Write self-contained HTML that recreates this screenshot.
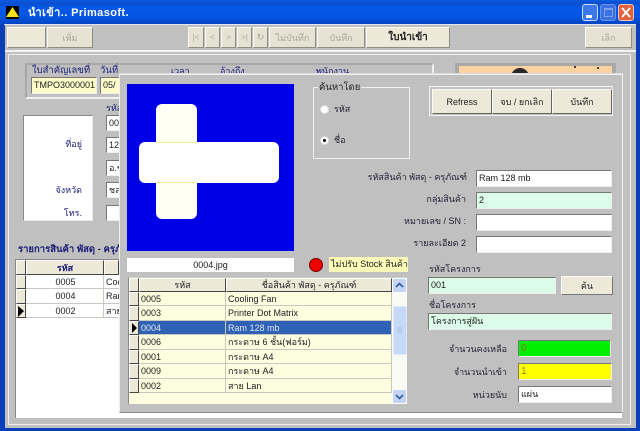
<!DOCTYPE html>
<html><head><meta charset="utf-8"><style>
html,body{margin:0;padding:0;background:#c0c0c0}
#w{position:relative;width:640px;height:431px;overflow:hidden;background:#c0c0c0;font-family:"Liberation Sans",sans-serif;font-size:9px;color:#222;filter:blur(.35px)}
#w div{position:absolute;box-sizing:border-box;white-space:nowrap}
.btn{background:#ece9d8;border:1px solid;border-color:#fbfaf3 #8f8d80 #8f8d80 #fbfaf3;text-align:center;display:flex;align-items:center;justify-content:center;color:#222;font-size:9px}
.dis{color:#aaa69a;background:#e6e3d4}
.in{background:#fff;border:1px solid;border-color:#777 #eee #eee #777;padding-left:2px;font-size:9px;line-height:15px;color:#222}
.lb{color:#223;font-size:9px;line-height:12px}
.nv{color:#1c1c78;font-size:9px;line-height:12px}
.r{text-align:right}
.cell{border-right:1px solid #c8c8c0;border-bottom:1px solid #c8c8c0;line-height:14px;padding-left:2px;font-size:9px;color:#222}
.ind{background:#ece9d8;border:1px solid;border-color:#fff #444 #444 #fff}
</style></head><body><div id="w">
<!-- window frame -->
<div style="left:0;top:0;width:640px;height:24px;background:linear-gradient(#0a5be0 0,#0a4fd0 3px,#0658e8 8px,#0454e0 17px,#0344c0 24px)"></div>
<div style="left:0;top:24px;width:5px;height:407px;background:#0a3fb8"></div>
<div style="left:636px;top:24px;width:4px;height:407px;background:#0a3fb8"></div>
<div style="left:0;top:428px;width:640px;height:3px;background:#0a3fb8"></div>
<!-- title -->
<div style="left:6px;top:6px;width:13px;height:13px;background:#000"></div>
<svg style="position:absolute;left:6px;top:7px" width="13" height="11"><polygon points="6.5,0 13,10 0,10" fill="#f6e020"/></svg>
<div style="left:28px;top:6px;color:#fff;font-size:11px;font-weight:bold;line-height:14px;letter-spacing:.4px">นำเข้า.. Primasoft.</div>
<div style="left:582px;top:4px;width:16px;height:17px;background:#3c78ea;border:1px solid #cfdcf8;border-radius:3px"></div>
<div style="left:586px;top:15px;width:6px;height:3px;background:#fff"></div>
<div style="left:600px;top:4px;width:16px;height:17px;background:#3a70e0;border:1px solid #6a96ea;border-radius:3px"></div>
<div style="left:604px;top:8px;width:9px;height:9px;border:1px solid #7ea2e8;border-top-width:2px"></div>
<div style="left:618px;top:4px;width:16px;height:17px;background:#e2603c;border:1px solid #f0c8b8;border-radius:3px"></div>
<svg style="position:absolute;left:618px;top:4px" width="16" height="17"><path d="M4 4L12 13M12 4L4 13" stroke="#fff" stroke-width="2"/></svg>
<!-- toolbar -->
<div style="left:4px;top:24px;width:632px;height:1px;background:#dfe6f0"></div>
<div class="btn" style="left:7px;top:27px;width:39px;height:21px"></div>
<div class="btn dis" style="left:47px;top:27px;width:46px;height:21px">เพิ่ม</div>
<div class="btn dis" style="left:188px;top:27px;width:16px;height:21px;font-size:8px">|&lt;</div>
<div class="btn dis" style="left:205px;top:27px;width:15px;height:21px;font-size:8px">&lt;</div>
<div class="btn dis" style="left:221px;top:27px;width:15px;height:21px;font-size:8px">&gt;</div>
<div class="btn dis" style="left:237px;top:27px;width:15px;height:21px;font-size:8px">&gt;|</div>
<div class="btn dis" style="left:253px;top:27px;width:15px;height:21px;font-size:9px">↻</div>
<div class="btn dis" style="left:269px;top:27px;width:47px;height:21px">ไม่บันทึก</div>
<div class="btn dis" style="left:317px;top:27px;width:48px;height:21px">บันทึก</div>
<div class="btn" style="left:366px;top:27px;width:84px;height:21px;font-weight:bold;font-size:10px">ใบนำเข้า</div>
<div class="btn dis" style="left:585px;top:27px;width:47px;height:21px">เลิก</div>
<div style="left:5px;top:50px;width:631px;height:2px;background:#f2f2f2"></div>
<!-- main panel -->
<div style="left:8px;top:54px;width:623px;height:371px;border:1px solid #f0f0f0"></div>
<!-- top group -->
<div style="left:25px;top:63px;width:409px;height:36px;border:2px solid;border-color:#a8a8a8 #eee #f0f0f0 #a8a8a8"></div>
<div class="nv" style="left:32px;top:65px;font-size:9.5px">ใบสำคัญเลขที่</div>
<div class="nv" style="left:100px;top:65px;font-size:9.5px">วันที่</div>
<div class="nv" style="left:171px;top:65px">เวลา</div>
<div class="nv" style="left:220px;top:65px">อ้างถึง</div>
<div class="nv" style="left:316px;top:65px">พนักงาน</div>
<div class="in" style="left:31px;top:77px;width:66px;height:17px;background:#fdfbc8">TMPO3000001</div>
<div class="in" style="left:100px;top:77px;width:20px;height:17px;background:#fdfbc8">05/</div>
<!-- peach -->
<div style="left:455px;top:63px;width:161px;height:12px;background:#a8a8a8"></div>
<div style="left:459px;top:66px;width:153px;height:9px;background:#f9d2a0"></div>
<div style="left:511px;top:68px;width:18px;height:18px;background:#2a2a2a;border-radius:50%"></div>
<div style="left:574px;top:66px;width:2px;height:2px;background:#444"></div>
<div style="left:597px;top:67px;width:2px;height:2px;background:#444"></div>
<!-- left box -->
<div style="left:23px;top:115px;width:70px;height:106px;background:#fff;border:1px solid;border-color:#888 #e8e8e8 #e8e8e8 #888"></div>
<div class="nv r" style="left:40px;top:138px;width:42px">ที่อยู่</div>
<div class="nv r" style="left:40px;top:184px;width:42px">จังหวัด</div>
<div class="nv r" style="left:40px;top:207px;width:42px">โทร.</div>
<div class="nv" style="left:106px;top:102px">รหัส</div>
<div class="in" style="left:106px;top:115px;width:14px;height:16px;line-height:14px">00</div>
<div class="in" style="left:106px;top:137px;width:14px;height:16px;line-height:14px">12</div>
<div class="in" style="left:106px;top:160px;width:14px;height:16px;line-height:14px">อ.ข</div>
<div class="in" style="left:106px;top:182px;width:14px;height:16px;line-height:14px">ชล</div>
<div class="in" style="left:106px;top:205px;width:14px;height:16px"></div>
<!-- left grid -->
<div style="left:18px;top:243px;color:#1c1c78;font-size:9.5px;font-weight:bold;line-height:13px;width:101px;overflow:hidden">รายการสินค้า พัสดุ - ครุภัณฑ์</div>
<div style="left:15px;top:259px;width:607px;height:159px;background:#fff;border-left:1px solid #888;border-top:1px solid #888"></div>
<div class="btn" style="left:16px;top:260px;width:10px;height:15px;border-color:#fff #444 #444 #fff"></div>
<div class="btn" style="left:26px;top:260px;width:78px;height:15px;border-color:#fff #444 #444 #fff;font-weight:bold;color:#1c1c78">รหัส</div>
<div class="btn" style="left:104px;top:260px;width:15px;height:15px;border-color:#fff #444 #444 #fff"></div>
<div class="ind" style="left:16px;top:275px;width:10px;height:14px"></div>
<div class="ind" style="left:16px;top:289px;width:10px;height:15px"></div>
<div class="ind" style="left:16px;top:304px;width:10px;height:14px"></div>
<svg style="position:absolute;left:17px;top:306px" width="8" height="11"><polygon points="1,0 7,5 1,11" fill="#000"/></svg>
<div class="cell" style="left:26px;top:275px;width:78px;height:14px;text-align:center">0005</div>
<div class="cell" style="left:26px;top:289px;width:78px;height:15px;text-align:center">0004</div>
<div class="cell" style="left:26px;top:304px;width:78px;height:14px;text-align:center">0002</div>
<div class="cell" style="left:104px;top:275px;width:15px;height:14px;overflow:hidden;border-right:0">Coo</div>
<div class="cell" style="left:104px;top:289px;width:15px;height:15px;overflow:hidden;border-right:0">Ram</div>
<div class="cell" style="left:104px;top:304px;width:15px;height:14px;overflow:hidden;border-right:0">สาย</div>
<!-- dialog -->
<div style="left:119px;top:74px;width:504px;height:339px;background:#c0c0c0;border:1px solid;border-color:#efefef #efefef #8a8a8a #efefef;box-shadow:0 -1px 0 #dcdcdc"></div>
<div style="left:127px;top:84px;width:167px;height:167px;background:#0000e6"></div>
<div style="left:156px;top:104px;width:41px;height:115px;background:#fffff4;border-radius:6px"></div>
<div style="left:139px;top:142px;width:140px;height:41px;background:#fff;border-radius:6px"></div>
<div style="left:157px;top:142px;width:39px;height:1px;background:#f4ec90"></div>
<div style="left:157px;top:182px;width:39px;height:1px;background:#f4ec90"></div>
<div style="left:127px;top:258px;width:167px;height:14px;background:#fff;text-align:center;font-size:9px;line-height:14px;color:#222">0004.jpg</div>
<div style="left:309px;top:258px;width:14px;height:14px;background:#ee0000;border:1px solid #700;border-radius:50%"></div>
<div style="left:329px;top:257px;width:79px;height:15px;background:#fdfbb8;font-size:9px;line-height:15px;padding-left:2px;color:#222;overflow:hidden">ไม่ปรับ Stock สินค้า</div>
<!-- search group -->
<div style="left:313px;top:87px;width:97px;height:72px;border:1px solid #f0f0f0"></div>
<div style="left:318px;top:81px;background:#c0c0c0;padding:0 1px;font-size:9.5px;line-height:13px;color:#222">ค้นหาโดย</div>
<div style="left:320px;top:105px;width:9px;height:9px;background:#fff;border-radius:50%;border:1px solid #ddd"></div>
<div style="left:320px;top:136px;width:9px;height:9px;background:#fff;border-radius:50%;border:1px solid #ddd"></div>
<div style="left:323px;top:139px;width:3px;height:3px;background:#000;border-radius:50%"></div>
<div class="lb" style="left:334px;top:103px">รหัส</div>
<div class="lb" style="left:334px;top:134px">ชื่อ</div>
<!-- action buttons -->
<div style="left:429px;top:86px;width:184px;height:30px;border:1px solid #f4f4f4"></div>
<div class="btn" style="left:432px;top:89px;width:60px;height:25px;border-color:#fbfaf3 #666 #666 #fbfaf3">Refress</div>
<div class="btn" style="left:492px;top:89px;width:60px;height:25px;border-color:#fbfaf3 #666 #666 #fbfaf3">จบ / ยกเลิก</div>
<div class="btn" style="left:552px;top:89px;width:60px;height:25px;border-color:#fbfaf3 #666 #666 #fbfaf3">บันทึก</div>
<!-- right form -->
<div class="lb r" style="left:337px;top:171px;width:130px">รหัสสินค้า พัสดุ - ครุภัณฑ์</div>
<div class="lb r" style="left:336px;top:193px;width:130px">กลุ่มสินค้า</div>
<div class="lb r" style="left:336px;top:215px;width:130px">หมายเลข / SN :</div>
<div class="lb r" style="left:336px;top:237px;width:130px">รายละเอียด 2</div>
<div class="in" style="left:476px;top:170px;width:136px;height:17px">Ram 128 mb</div>
<div class="in" style="left:476px;top:192px;width:136px;height:17px;background:#dcfbe8">2</div>
<div class="in" style="left:476px;top:214px;width:136px;height:17px"></div>
<div class="in" style="left:476px;top:236px;width:136px;height:17px"></div>
<div class="lb" style="left:429px;top:263px">รหัสโครงการ</div>
<div class="in" style="left:428px;top:277px;width:128px;height:17px;background:#dcfbe8">001</div>
<div class="btn" style="left:561px;top:276px;width:52px;height:19px;border-color:#fbfaf3 #777 #777 #fbfaf3">ค้น</div>
<div class="lb" style="left:429px;top:299px">ชื่อโครงการ</div>
<div class="in" style="left:428px;top:313px;width:184px;height:17px;background:#dcfbe8">โครงการสู่ฝัน</div>
<div class="lb r" style="left:430px;top:343px;width:77px">จำนวนคงเหลือ</div>
<div class="lb r" style="left:430px;top:366px;width:77px">จำนวนนำเข้า</div>
<div class="lb r" style="left:430px;top:389px;width:77px">หน่วยนับ</div>
<div class="in" style="left:518px;top:340px;width:93px;height:17px;background:#00ee00;color:#7a7a20;font-size:10px">0</div>
<div class="in" style="left:518px;top:363px;width:94px;height:17px;background:#ffff00;color:#8a8a20;font-size:10px">1</div>
<div class="in" style="left:518px;top:386px;width:94px;height:17px">แผ่น</div>
<!-- dialog grid -->
<div style="left:128px;top:277px;width:279px;height:127px;background:#fdfde0;border-left:1px solid #888;border-top:1px solid #ccc"></div>
<div class="btn" style="left:129px;top:278px;width:10px;height:14px;border-color:#fff #444 #444 #fff"></div>
<div class="btn" style="left:139px;top:278px;width:87px;height:14px;border-color:#fff #444 #444 #fff">รหัส</div>
<div class="btn" style="left:226px;top:278px;width:166px;height:14px;border-color:#fff #444 #444 #fff">ชื่อสินค้า พัสดุ - ครุภัณฑ์</div>
<div class="ind" style="left:129px;top:292px;width:10px;height:14px"></div><div class="cell" style="left:139px;top:292px;width:87px;height:14px">0005</div><div class="cell" style="left:226px;top:292px;width:166px;height:14px">Cooling Fan</div>
<div class="ind" style="left:129px;top:306px;width:10px;height:15px"></div><div class="cell" style="left:139px;top:306px;width:87px;height:15px">0003</div><div class="cell" style="left:226px;top:306px;width:166px;height:15px">Printer Dot Matrix</div>
<div class="ind" style="left:129px;top:321px;width:10px;height:14px"></div><div class="cell" style="left:139px;top:321px;width:87px;height:14px;background:#2f62b4;color:#dfe6f4">0004</div><div class="cell" style="left:226px;top:321px;width:166px;height:14px;background:#2f62b4;color:#dfe6f4">Ram 128 mb</div>
<svg style="position:absolute;left:131px;top:323px" width="7" height="11"><polygon points="1,0 6,5 1,10" fill="#000"/></svg>
<div class="ind" style="left:129px;top:335px;width:10px;height:15px"></div><div class="cell" style="left:139px;top:335px;width:87px;height:15px">0006</div><div class="cell" style="left:226px;top:335px;width:166px;height:15px">กระดาษ 6 ชั้น(ฟอร์ม)</div>
<div class="ind" style="left:129px;top:350px;width:10px;height:14px"></div><div class="cell" style="left:139px;top:350px;width:87px;height:14px">0001</div><div class="cell" style="left:226px;top:350px;width:166px;height:14px">กระดาษ A4</div>
<div class="ind" style="left:129px;top:364px;width:10px;height:15px"></div><div class="cell" style="left:139px;top:364px;width:87px;height:15px">0009</div><div class="cell" style="left:226px;top:364px;width:166px;height:15px">กระดาษ A4</div>
<div class="ind" style="left:129px;top:379px;width:10px;height:14px"></div><div class="cell" style="left:139px;top:379px;width:87px;height:14px">0002</div><div class="cell" style="left:226px;top:379px;width:166px;height:14px">สาย Lan</div>
<!-- scrollbar -->
<div style="left:392px;top:278px;width:15px;height:126px;background:#fbfbf6"></div>
<div style="left:392px;top:278px;width:15px;height:15px;background:#c4d4f4;border:1px solid #fff;border-radius:2px"></div>
<div style="left:392px;top:389px;width:15px;height:15px;background:#c4d4f4;border:1px solid #fff;border-radius:2px"></div>
<div style="left:393px;top:306px;width:14px;height:49px;background:#c8d8f8;border:1px solid #dfe8fa;border-radius:2px"></div>
<svg style="position:absolute;left:392px;top:278px" width="15" height="126"><path d="M4 9L7.5 5.5L11 9M4 117L7.5 120.5L11 117" fill="none" stroke="#335a9c" stroke-width="1.6"/><path d="M5 50H10M5 52H10M5 54H10" stroke="#a8bce0"/></svg>
</div></body></html>
